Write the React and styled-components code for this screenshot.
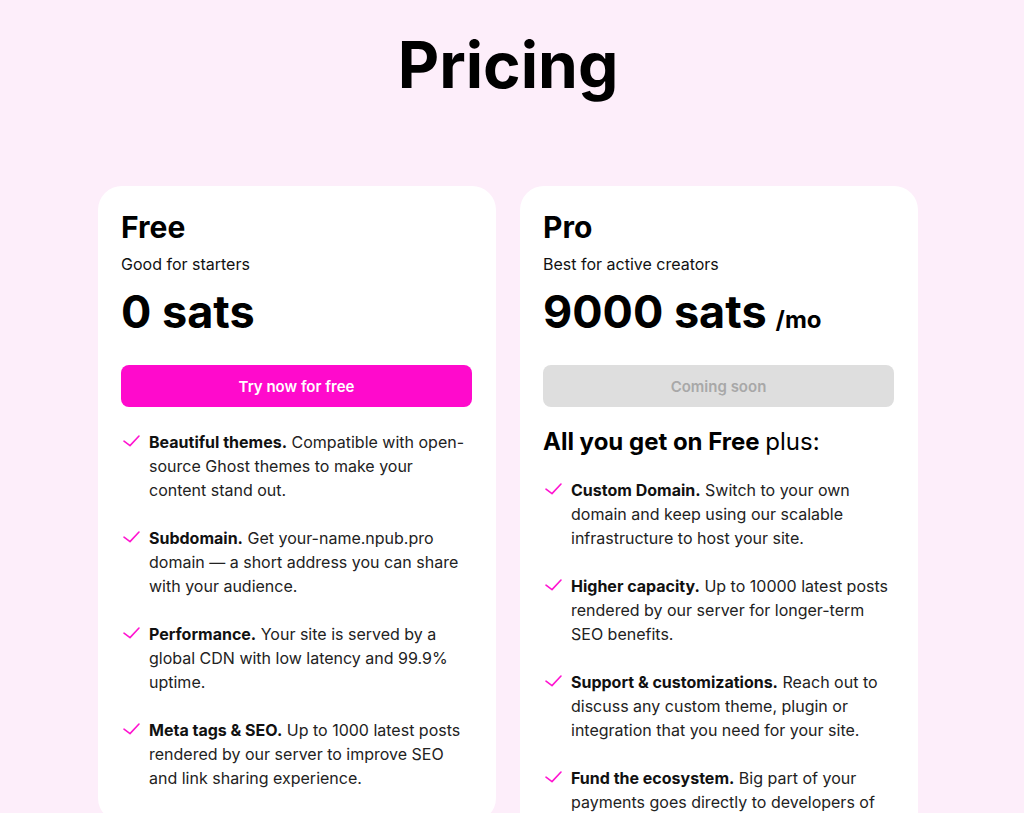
import React from "react";
import styled, { createGlobalStyle } from "styled-components";

const Global = createGlobalStyle`
  html, body { margin: 0; padding: 0; }
  body {
    background: #fdeefa;
    font-family: Inter, "Noto Sans", sans-serif;
    color: #000;
    -webkit-font-smoothing: antialiased;
  }
`;

const Page = styled.main`
  padding: 29px 8px 0 0;
  display: flex;
  flex-direction: column;
  align-items: center;
`;

const Title = styled.h1`
  margin: 0;
  font-size: 64px;
  line-height: 72px;
  font-weight: 700;
`;

const Cards = styled.div`
  margin-top: 85px;
  display: grid;
  grid-template-columns: 398px 398px;
  gap: 24px;
  align-items: start;
`;

const Card = styled.section`
  background: #fff;
  border-radius: 24px;
  padding: 23px 24px 32px 23px;
  display: flex;
  flex-direction: column;
`;

const PlanName = styled.h2`
  margin: 0;
  font-size: 30px;
  line-height: 36px;
  font-weight: 700;
`;

const Subtitle = styled.p`
  margin: 7px 0 0;
  font-size: 16px;
  line-height: 24px;
  color: #111;
`;

const Price = styled.div`
  margin-top: 8px;
  height: 56px;
  font-size: 45px;
  line-height: 56px;
  font-weight: 700;
  display: flex;
  align-items: baseline;
  gap: 9px;
`;

const Per = styled.span`
  font-size: 24px;
  line-height: 1;
  font-weight: 700;
`;

const Button = styled.button`
  margin-top: 25px;
  height: 42px;
  border: none;
  border-radius: 8px;
  font-family: inherit;
  font-size: 15px;
  font-weight: 600;
  background: ${(p) => (p.$disabled ? "#dedede" : "#ff0acc")};
  color: ${(p) => (p.$disabled ? "#a8a8a8" : "#fff")};
  cursor: ${(p) => (p.$disabled ? "default" : "pointer")};
`;

const Plus = styled.h3`
  margin: 19px 0 0;
  font-size: 24px;
  line-height: 32px;
  font-weight: 700;
  span { font-weight: 400; }
`;

const Features = styled.ul`
  list-style: none;
  margin: ${(p) => (p.$top ? p.$top : "23px")} 0 0;
  padding: 0;
  display: flex;
  flex-direction: column;
  gap: 24px;
`;

const Feature = styled.li`
  display: flex;
  gap: 8px;
  font-size: 16px;
  line-height: 24px;
  color: #222;
  b { color: #111; font-weight: 700; }
`;

const CheckWrap = styled.span`
  flex: 0 0 20px;
  height: 20px;
  margin-top: 2px;
  svg { display: block; }
`;

const Check = () => (
  <CheckWrap>
    <svg width="20" height="20" viewBox="0 0 20 20" fill="none">
      <path d="M3 9.2 L9 13.6 L18 4" stroke="#ff14d0" strokeWidth="1.6" strokeLinecap="round" strokeLinejoin="round" />
    </svg>
  </CheckWrap>
);

const free = [
  ["Beautiful themes.", "Compatible with open-source Ghost themes to make your content stand out."],
  ["Subdomain.", "Get your-name.npub.pro domain — a short address you can share with your audience."],
  ["Performance.", "Your site is served by a global CDN with low latency and 99.9% uptime."],
  ["Meta tags & SEO.", "Up to 1000 latest posts rendered by our server to improve SEO and link sharing experience."],
];

const pro = [
  ["Custom Domain.", "Switch to your own domain and keep using our scalable infrastructure to host your site."],
  ["Higher capacity.", "Up to 10000 latest posts rendered by our server for longer-term SEO benefits."],
  ["Support & customizations.", "Reach out to discuss any custom theme, plugin or integration that you need for your site."],
  ["Fund the ecosystem.", "Big part of your payments goes directly to developers of Nostr apps and relays."],
];

const List = ({ items, top }) => (
  <Features $top={top}>
    {items.map(([b, t]) => (
      <Feature key={b}>
        <Check />
        <span>
          <b>{b}</b> {t}
        </span>
      </Feature>
    ))}
  </Features>
);

export default function App() {
  return (
    <>
      <Global />
      <Page>
        <Title>Pricing</Title>
        <Cards>
          <Card>
            <PlanName>Free</PlanName>
            <Subtitle>Good for starters</Subtitle>
            <Price>0 sats</Price>
            <Button>Try now for free</Button>
            <List items={free} />
          </Card>
          <Card>
            <PlanName>Pro</PlanName>
            <Subtitle>Best for active creators</Subtitle>
            <Price>
              9000 sats <Per>/mo</Per>
            </Price>
            <Button $disabled disabled>Coming soon</Button>
            <Plus>
              All you get on Free <span>plus:</span>
            </Plus>
            <List items={pro} top="20px" />
          </Card>
        </Cards>
      </Page>
    </>
  );
}
